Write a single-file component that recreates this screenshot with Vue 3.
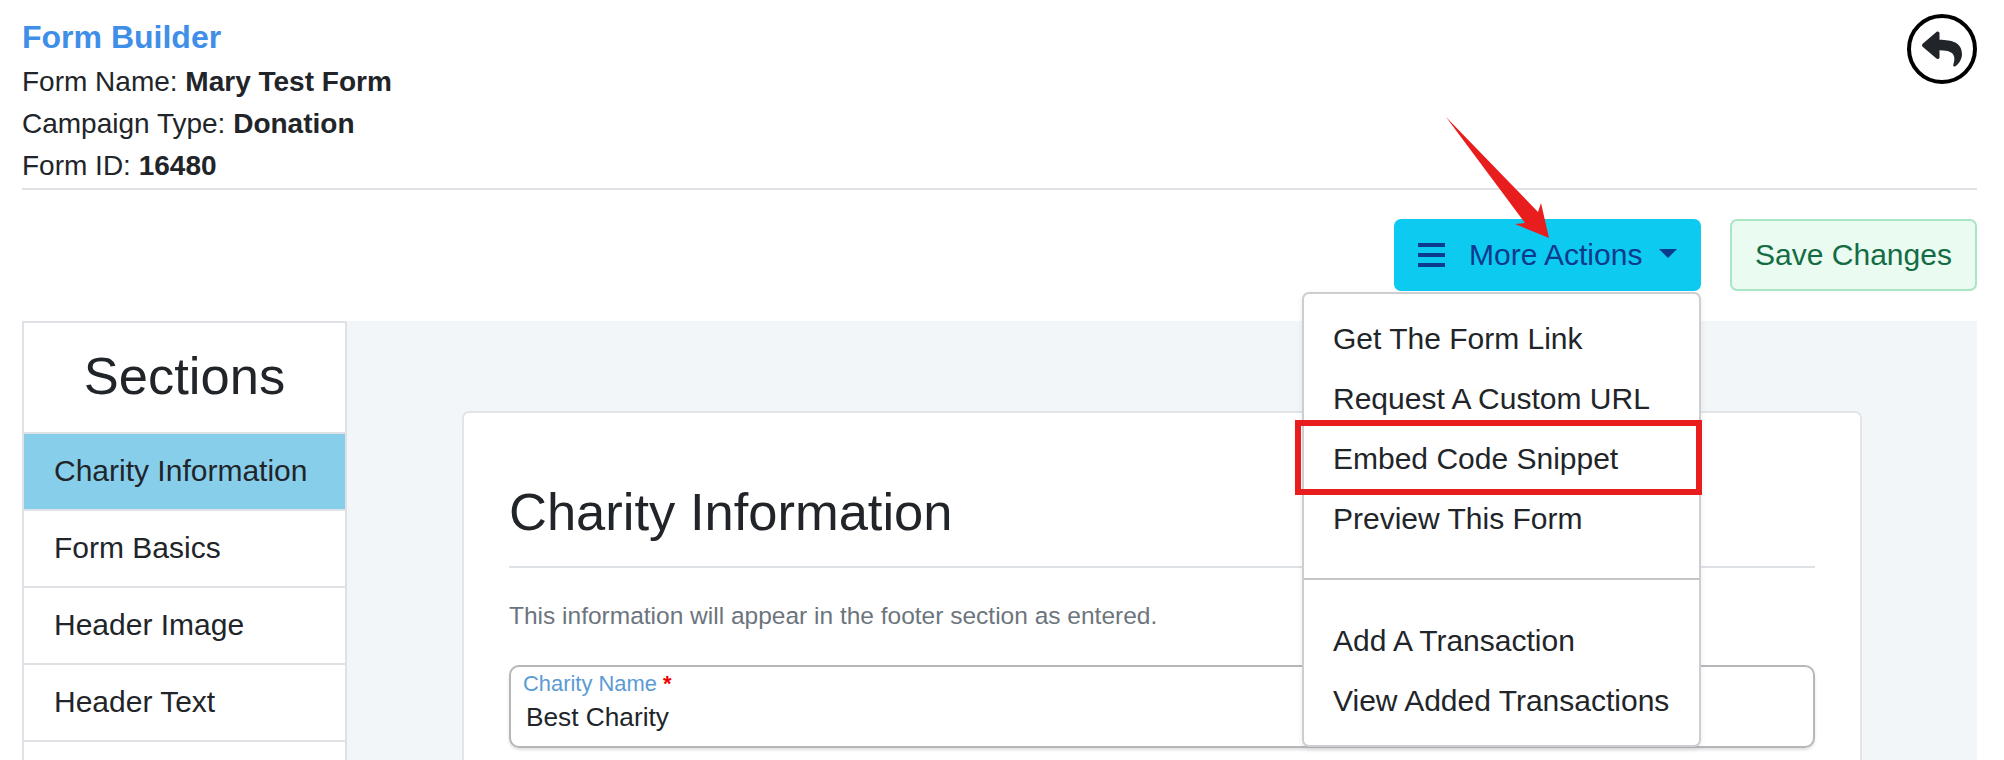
<script setup>
const sections = ['Charity Information', 'Form Basics', 'Header Image', 'Header Text']
const menuTop = ['Get The Form Link', 'Request A Custom URL', 'Embed Code Snippet', 'Preview This Form']
const menuBottom = ['Add A Transaction', 'View Added Transactions']
</script>

<template>
  <div class="page">
    <header class="head">
      <div>
        <h1 class="title">Form Builder</h1>
        <p class="meta">Form Name: <b>Mary Test Form</b></p>
        <p class="meta">Campaign Type: <b>Donation</b></p>
        <p class="meta">Form ID: <b>16480</b></p>
      </div>
      <button class="back" aria-label="Back">
        <svg viewBox="0 0 512 512" width="40" height="40">
          <path fill="#212529" d="M8.309 189.836L184.313 37.851C199.719 24.546 224 35.347 224 56.015v80.053c160.629 1.839 288 34.032 288 186.258 0 61.441-39.581 122.309-83.333 154.132-13.653 9.931-33.111-2.533-28.077-18.631 45.344-145.012-21.507-183.51-176.59-185.742V360c0 20.7-24.3 31.453-39.687 18.164l-176.004-152c-11.071-9.562-11.086-26.753 0-36.328z"/>
        </svg>
      </button>
    </header>

    <div class="toolbar">
      <div class="more">
        <button class="btn info">
          <span class="bars"><i></i><i></i><i></i></span>
          <span class="nowrap">More Actions</span>
          <span class="caret"></span>
        </button>
        <div class="menu">
          <a v-for="m in menuTop" :key="m" class="menu-item">{{ m }}</a>
          <div class="divider"></div>
          <a v-for="m in menuBottom" :key="m" class="menu-item">{{ m }}</a>
          <div class="callout"></div>
        </div>
        <svg class="arrow" viewBox="0 0 150 145" width="150" height="145">
          <polygon fill="#e81e1e" points="16,11 108,106 111,97 119,132 85,118 95,117" />
        </svg>
      </div>
      <button class="btn save">Save Changes</button>
    </div>

    <main class="body">
      <nav class="side">
        <div class="side-head">Sections</div>
        <a v-for="(s, i) in sections" :key="s" class="side-item" :class="{ active: i === 0 }">{{ s }}</a>
      </nav>
      <section class="panel">
        <div class="card">
          <h2 class="card-title">Charity Information</h2>
          <p class="note">This information will appear in the footer section as entered.</p>
          <div class="field">
            <label class="label">Charity Name <span class="req">*</span></label>
            <div class="value">Best Charity</div>
          </div>
        </div>
      </section>
    </main>
  </div>
</template>

<style>
html, body { margin: 0; height: 760px; overflow: hidden; background: #fff; }
</style>

<style scoped>
.page {
  box-sizing: border-box;
  width: 2004px;
  height: 760px;
  overflow: hidden;
  padding: 15px 27px 0 22px;
  font-family: "Liberation Sans", Arial, sans-serif;
  color: #212529;
}
.head {
  display: flex;
  justify-content: space-between;
  align-items: flex-start;
  border-bottom: 2px solid #dee2e6;
  height: 173px;
}
.title {
  margin: 0 0 2px;
  font-size: 32px;
  line-height: 44px;
  font-weight: 700;
  color: #3f8fe8;
}
.meta { margin: 0; font-size: 28px; line-height: 42px; }
.meta b { font-weight: 700; }
.back {
  box-sizing: border-box;
  width: 70px;
  height: 70px;
  margin-top: -1px;
  border: 4px solid #000;
  border-radius: 50%;
  background: #fff;
  padding: 0;
  display: flex;
  align-items: center;
  justify-content: center;
}
.toolbar {
  display: flex;
  justify-content: flex-end;
  gap: 29px;
  margin-top: 29px;
}
.more { position: relative; }
.btn {
  box-sizing: border-box;
  height: 72px;
  font-family: inherit;
  font-size: 30px;
  border-radius: 7px;
  display: flex;
  align-items: center;
}
.nowrap { white-space: nowrap; }
.info {
  width: 307px;
  padding: 0 24px;
  background: #0dcaf0;
  border: 0;
  color: #0c3a8c;
}
.bars {
  flex: none;
  display: flex;
  flex-direction: column;
  justify-content: space-between;
  width: 27px;
  height: 24px;
  margin-right: 24px;
}
.bars i { display: block; height: 4px; background: #0c3a8c; }
.caret {
  flex: none;
  width: 0;
  height: 0;
  margin: -3px 0 0 17px;
  border-left: 9px solid transparent;
  border-right: 9px solid transparent;
  border-top: 9px solid #0c3a8c;
}
.save {
  width: 247px;
  justify-content: center;
  padding: 0;
  background: #eafbf1;
  border: 2px solid #a9e6c5;
  color: #146c43;
}
.arrow { position: absolute; left: 36px; top: -113px; z-index: 4; pointer-events: none; }
.menu {
  box-sizing: border-box;
  position: absolute;
  z-index: 3;
  right: 0;
  top: 73px;
  width: 399px;
  height: 455px;
  padding: 15px 0 0;
  background: #fff;
  border: 2px solid #ccced1;
  border-radius: 7px;
  font-size: 30px;
  box-shadow: 0 2px 6px rgba(0, 0, 0, 0.08);
}
.menu-item { display: block; height: 60px; line-height: 60px; padding-left: 29px; }
.divider { height: 2px; margin: 29px 0 31px; background: #c4c6c9; }
.callout {
  position: absolute;
  left: -9px;
  top: 126px;
  width: 407px;
  height: 75px;
  box-sizing: border-box;
  border: 6px solid #e81e1e;
}
.body { display: flex; margin-top: 30px; }
.side {
  box-sizing: border-box;
  flex: 0 0 325px;
  border: 2px solid #dee2e6;
  border-bottom: 0;
  background: #fff;
  height: 439px;
}
.side-head {
  height: 109px;
  line-height: 106px;
  text-align: center;
  font-size: 52.5px;
  border-bottom: 2px solid #dee2e6;
}
.side-item {
  display: block;
  box-sizing: border-box;
  height: 77px;
  line-height: 74px;
  padding-left: 30px;
  font-size: 30px;
  border-bottom: 2px solid #dee2e6;
}
.side-item.active { background: #87ceeb; }
.panel {
  flex: 1;
  height: 439px;
  background: #f3f6f9;
  padding: 90px 115px 0 115px;
}
.card {
  box-sizing: border-box;
  height: 420px;
  background: #fff;
  border: 2px solid #e1e5ea;
  border-radius: 7px;
  padding: 67px 45px 0 45px;
}
.card-title {
  margin: 0;
  font-size: 52.5px;
  font-weight: 400;
  line-height: 63px;
  padding-bottom: 23px;
  border-bottom: 2px solid #dee2e6;
}
.note {
  margin: 30px 0 0;
  font-size: 24.5px;
  line-height: 36px;
  color: #6c757d;
}
.field {
  box-sizing: border-box;
  height: 83px;
  margin-top: 31px;
  padding: 3px 14px 0 12px;
  border: 2px solid #b5b8bb;
  border-radius: 10px;
  box-shadow: 0 2px 3px rgba(0, 0, 0, 0.12);
}
.label { display: block; font-size: 21.9px; line-height: 28px; color: #5b9bd5; }
.req { color: #e00; font-weight: 700; }
.value { font-size: 26.25px; line-height: 38px; color: #212529; padding-left: 3px; }
</style>
